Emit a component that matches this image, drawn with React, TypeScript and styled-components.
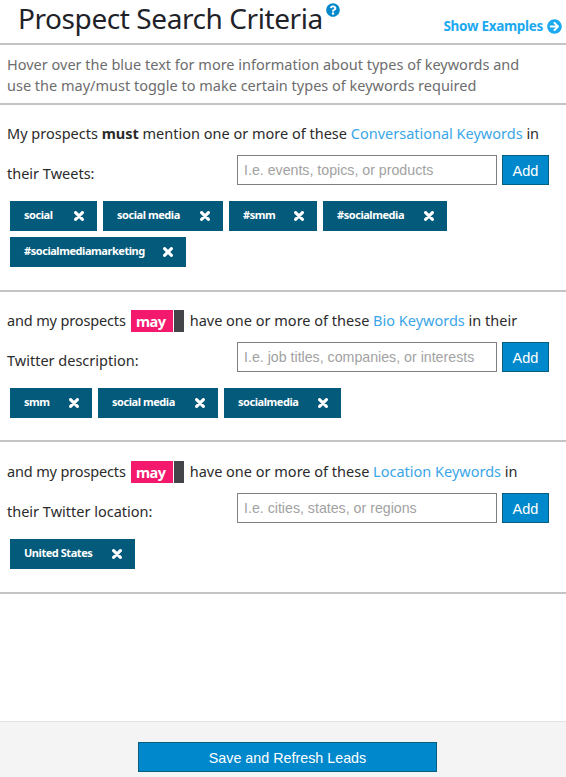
import styled, { createGlobalStyle } from 'styled-components';
import { FaArrowCircleRight, FaQuestionCircle } from 'react-icons/fa';

const GlobalStyle = createGlobalStyle`
  html, body {
    margin: 0;
    padding: 0;
    background: #fff;
  }
  body {
    font-family: "Noto Sans", "Open Sans", sans-serif;
    color: #2b2b2b;
  }
`;

const Page = styled.div`
  width: 566px;
  height: 777px;
  display: flex;
  flex-direction: column;
  overflow: hidden;
`;

const Header = styled.header`
  height: 43px;
  flex: none;
  display: flex;
  justify-content: space-between;
  padding: 0 4px 0 18px;
  border-bottom: 2px solid #c4c4c4;
`;

const TitleWrap = styled.div`
  display: flex;
  align-items: flex-start;
`;

const Title = styled.h1`
  margin: 0;
  font-size: 28px;
  line-height: 37px;
  font-weight: 400;
  letter-spacing: -0.42px;
  color: #1f2329;
`;

const HelpIcon = styled(FaQuestionCircle)`
  color: #0088cc;
  font-size: 14px;
  margin: 3px 0 0 3px;
`;

const ExamplesLink = styled.a`
  display: flex;
  align-items: center;
  gap: 4px;
  align-self: flex-end;
  margin-bottom: 8px;
  font-size: 13.5px;
  font-weight: 700;
  color: #1ba9f0;
  letter-spacing: -0.3px;
`;

const Intro = styled.p`
  margin: 0;
  height: 60px;
  flex: none;
  box-sizing: border-box;
  padding: 9px 7px 0;
  font-size: 14.5px;
  line-height: 20.5px;
  color: #6d6d6d;
  border-bottom: 2px solid #c4c4c4;
`;

const Section = styled.section<{ $height: number }>`
  height: ${(p) => p.$height}px;
  flex: none;
  box-sizing: border-box;
  padding-right: 7px;
  border-bottom: 2px solid #c4c4c4;
`;

const Sentence = styled.div<{ $top: number }>`
  display: flex;
  align-items: flex-start;
  gap: 5px;
  height: 22px;
  margin-top: ${(p) => p.$top}px;
  padding-left: 7px;
  font-size: 14.5px;
  line-height: 20px;
  white-space: nowrap;
`;

const Lead = styled.span`
  letter-spacing: -0.15px;
`;

const Keyword = styled.span`
  color: #3aa6e8;
`;

const Toggle = styled.span`
  display: flex;
  height: 22px;
  margin-right: 1px;
`;

const ToggleLabel = styled.span`
  width: 42px;
  box-sizing: border-box;
  display: flex;
  align-items: center;
  justify-content: center;
  padding-right: 2px;
  background: #f5196e;
  color: #fff;
  font-weight: 700;
  letter-spacing: -0.5px;
`;

const ToggleKnob = styled.span`
  width: 10px;
  margin-left: 1px;
  background: #444549;
`;

const InputRow = styled.div`
  display: flex;
  align-items: center;
  justify-content: space-between;
  margin-top: 10px;
  padding-left: 7px;
`;

const RowLabel = styled.span`
  padding-top: 6px;
  font-size: 14.5px;
`;

const Controls = styled.div`
  display: flex;
  gap: 5px;
  margin-right: 10px;
`;

const KeywordInput = styled.input`
  width: 260px;
  height: 30px;
  box-sizing: border-box;
  padding: 0 6px;
  border: 1px solid #7f7f7f;
  font-family: "Liberation Sans", Arial, sans-serif;
  font-size: 14.2px;
  outline: none;
  &::placeholder {
    color: #a2a2a2;
    opacity: 1;
  }
`;

const AddButton = styled.button`
  width: 47px;
  height: 30px;
  padding: 1px 0 0;
  background: #0088cc;
  border: 1px solid #075f80;
  color: #fff;
  font-family: "Liberation Sans", Arial, sans-serif;
  font-size: 14.5px;
`;

const Tags = styled.div`
  display: flex;
  flex-wrap: wrap;
  gap: 6px;
  margin-top: 16px;
  padding-left: 10px;
  width: 450px;
`;

const Tag = styled.span<{ $width: number }>`
  width: ${(p) => p.$width}px;
  height: 30px;
  box-sizing: border-box;
  display: flex;
  align-items: center;
  justify-content: space-between;
  padding: 0 13px 3px 14px;
  background: #045a7a;
  color: #fff;
  font-size: 11px;
  font-weight: 700;
  letter-spacing: -0.45px;
  white-space: nowrap;
`;

const CloseIcon = styled.svg`
  width: 10px;
  height: 10px;
  margin-top: 3px;
  flex: none;
`;

const Spacer = styled.div`
  flex: 1;
`;

const Footer = styled.footer`
  height: 56px;
  flex: none;
  box-sizing: border-box;
  border-top: 1px solid #e2e2e2;
  background: #f4f4f4;
  display: flex;
  justify-content: center;
  padding: 20px 0 0 10px;
`;

const SaveButton = styled.button`
  width: 299px;
  height: 30px;
  margin-right: 1px;
  padding: 1px 0 0;
  background: #0088cc;
  border: 1px solid #075f80;
  color: #fff;
  font-family: "Liberation Sans", Arial, sans-serif;
  font-size: 14.3px;
`;

type TagItem = { label: string; width: number };

function TagList({ items }: { items: TagItem[] }) {
  return (
    <Tags>
      {items.map((item) => (
        <Tag key={item.label} $width={item.width}>
          {item.label}
          <CloseIcon viewBox="0 0 10 10">
            <path
              d="M1.6 1.6 L8.4 8.4 M8.4 1.6 L1.6 8.4"
              stroke="#fff"
              strokeWidth="3.1"
              strokeLinecap="round"
            />
          </CloseIcon>
        </Tag>
      ))}
    </Tags>
  );
}

function MayToggle() {
  return (
    <Toggle>
      <ToggleLabel>may</ToggleLabel>
      <ToggleKnob />
    </Toggle>
  );
}

export default function App() {
  return (
    <Page>
      <GlobalStyle />
      <Header>
        <TitleWrap>
          <Title>Prospect Search Criteria</Title>
          <HelpIcon />
        </TitleWrap>
        <ExamplesLink>
          Show Examples
          <FaArrowCircleRight size={15} />
        </ExamplesLink>
      </Header>
      <Intro>
        Hover over the blue text for more information about types of keywords and
        <br />
        use the may/must toggle to make certain types of keywords required
      </Intro>

      <Section $height={187}>
        <Sentence $top={18}>
          <span>
            My prospects <strong>must</strong> mention one or more of these{' '}
            <Keyword>Conversational Keywords</Keyword> in
          </span>
        </Sentence>
        <InputRow>
          <RowLabel>their Tweets:</RowLabel>
          <Controls>
            <KeywordInput placeholder="I.e. events, topics, or products" />
            <AddButton>Add</AddButton>
          </Controls>
        </InputRow>
        <TagList
          items={[
            { label: 'social', width: 87 },
            { label: 'social media', width: 120 },
            { label: '#smm', width: 88 },
            { label: '#socialmedia', width: 124 },
            { label: '#socialmediamarketing', width: 176 },
          ]}
        />
      </Section>

      <Section $height={150}>
        <Sentence $top={18}>
          <Lead>and my prospects</Lead>
          <MayToggle />
          <span>
            have one or more of these <Keyword>Bio Keywords</Keyword> in their
          </span>
        </Sentence>
        <InputRow>
          <RowLabel>Twitter description:</RowLabel>
          <Controls>
            <KeywordInput placeholder="I.e. job titles, companies, or interests" />
            <AddButton>Add</AddButton>
          </Controls>
        </InputRow>
        <TagList
          items={[
            { label: 'smm', width: 82 },
            { label: 'social media', width: 120 },
            { label: 'socialmedia', width: 117 },
          ]}
        />
      </Section>

      <Section $height={152}>
        <Sentence $top={19}>
          <Lead>and my prospects</Lead>
          <MayToggle />
          <span>
            have one or more of these <Keyword>Location Keywords</Keyword> in
          </span>
        </Sentence>
        <InputRow>
          <RowLabel>their Twitter location:</RowLabel>
          <Controls>
            <KeywordInput placeholder="I.e. cities, states, or regions" />
            <AddButton>Add</AddButton>
          </Controls>
        </InputRow>
        <TagList items={[{ label: 'United States', width: 125 }]} />
      </Section>

      <Spacer />
      <Footer>
        <SaveButton>Save and Refresh Leads</SaveButton>
      </Footer>
    </Page>
  );
}
